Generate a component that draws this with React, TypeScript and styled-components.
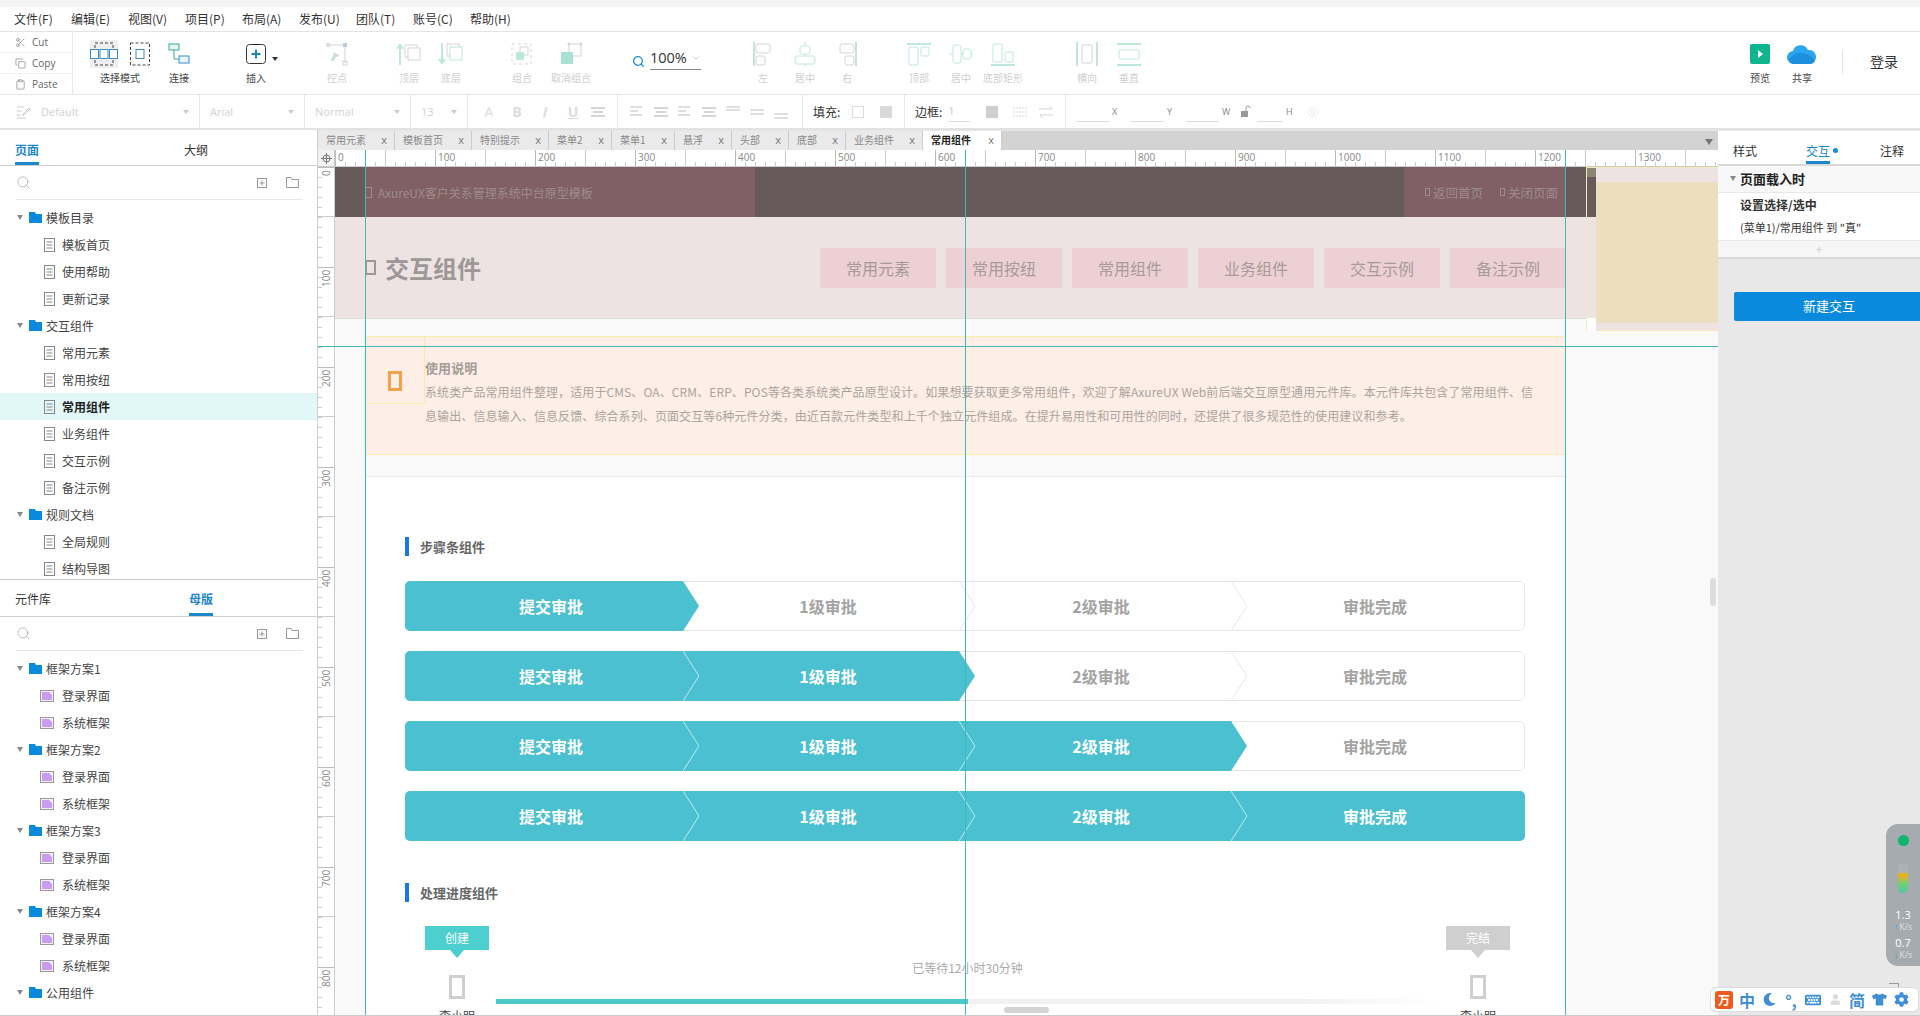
import React from "react";
import styled, { createGlobalStyle } from "styled-components";
import { Search, Eye, Scissors, Copy, Clipboard, ChevronDown } from "lucide-react";
import { FaCog, FaTshirt, FaKeyboard, FaUser, FaMoon } from "react-icons/fa";

const Global = createGlobalStyle`
  html, body { margin: 0; padding: 0; background: #fff; }
  body { font-family: "Noto Sans CJK SC", "Noto Sans", sans-serif; color: #333; }
  * { box-sizing: border-box; }
`;

const Root = styled.div`
  position: relative; width: 1920px; height: 1016px; overflow: hidden;
  display: flex; flex-direction: column; background: #fff;
`;
const TopStrip = styled.div`height: 7px; background: #f4f4f4; flex: none;`;
const MenuBar = styled.div`
  height: 25px; flex: none; display: flex; align-items: center; gap: 17px; padding-left: 14px;
  border-bottom: 1px solid #e4e4e4;
`;
const MenuItem = styled.span`font-size: 12px; line-height: 24px; color: #333; width: 40px; white-space: nowrap;`;

const Toolbar = styled.div`height: 63px; flex: none; display: flex; border-bottom: 1px solid #e6e6e6;`;
const ClipColumn = styled.div`width: 73px; flex: none; border-right: 1px solid #e6e6e6; display: flex; flex-direction: column;`;
const ClipRow = styled.div`
  flex: 1; display: flex; align-items: center; gap: 6px; padding-left: 15px; font-size: 10px; color: #666;
  font-family: "Open Sans", sans-serif; border-bottom: 1px solid #eee;
  &:last-child { border-bottom: 0; }
`;
const ToolGroup = styled.div<{ $ml?: number }>`display: flex; margin-left: ${p => p.$ml ?? 0}px; flex: none;`;
const ToolItem = styled.div<{ $w?: number }>`
  width: ${p => p.$w ?? 42}px; flex: none; display: flex; flex-direction: column; align-items: center; padding-top: 8px;
`;
const ToolIcon = styled.div`height: 28px; display: flex; align-items: center; justify-content: center; position: relative;`;
const ToolLabel = styled.div<{ $off?: boolean }>`
  font-size: 10px; line-height: 14px; margin-top: 3px; white-space: nowrap; color: ${p => (p.$off ? "#cfcfcf" : "#444")};
`;
const InsertCaret = styled.span`
  position: absolute; right: -12px; top: 17px; width: 0; height: 0;
  border-left: 3px solid transparent; border-right: 3px solid transparent; border-top: 4px solid #333;
`;
const SelectedBox = styled.div`background: #eee; width: 28px; height: 28px; display: flex; align-items: center; justify-content: center;`;
const SelectIcons = styled.div`display: flex; gap: 12px; align-items: center; height: 28px;`;
const ZoomBox = styled.div`width: 72px; display: flex; align-items: flex-start; padding-top: 15px; gap: 2px; flex: none; color: #1d8ccf;`;
const ZoomGlass = styled.span`display: flex; padding-top: 8px; flex: none;`;
const ZoomValue = styled.div`
  width: 51px; height: 23px; margin-left: 3px; border-bottom: 1px solid #888; font-size: 14.5px; line-height: 20px; color: #333;
  display: flex; align-items: center; gap: 4px; font-family: "Open Sans", sans-serif;
  svg { color: #bbb; }
`;
const RightTools = styled.div`margin-left: auto; display: flex; align-items: stretch; flex: none;`;
const VDivider = styled.div`width: 1px; height: 24px; background: #e5e5e5; margin: 18px 19px 0 19px;`;
const Login = styled.div`width: 58px; padding: 17px 0 0 8px; font-size: 14px; line-height: 24px; color: #333;`;

const FormatBar = styled.div`height: 35px; flex: none; display: flex; border-bottom: 2px solid #e2e2e2; color: #d4d4d4;`;
const FormatCell = styled.div<{ $w: number; $none?: boolean; $gap?: number; $pl?: number }>`
  width: ${p => p.$w}px; flex: none; display: flex; align-items: center; gap: ${p => p.$gap ?? 6}px; padding: 0 10px 0 ${p => p.$pl ?? 10}px;
  border-right: ${p => (p.$none ? "0" : "1px solid #e8e8e8")}; font-size: 11px; color: #d2d2d2; font-family: "Open Sans", sans-serif;
`;
const Caret = styled.span`
  margin-left: auto; width: 0; height: 0; border-left: 3px solid transparent; border-right: 3px solid transparent; border-top: 4px solid #ccc;
`;
const FmtLetter = styled.span<{ $i?: boolean; $u?: boolean; $thin?: boolean }>`
  width: 22px; text-align: center; font-size: 14px; font-weight: ${p => (p.$thin ? 400 : 700)}; color: #dcdcdc;
  font-style: ${p => (p.$i ? "italic" : "normal")}; text-decoration: ${p => (p.$u ? "underline" : "none")};
`;
const FieldLabel = styled.span`font-size: 12px; color: #333; white-space: nowrap; font-family: "Noto Sans CJK SC", sans-serif;`;
const FieldInput = styled.span<{ $w: number }>`
  width: ${p => p.$w}px; height: 20px; border-bottom: 1px solid #ddd; font-size: 11px; color: #ccc; line-height: 18px; flex: none;
`;
const AxisLabel = styled.span`font-size: 9px; color: #888; width: 13px; margin-left: -3px; font-family: "Open Sans", sans-serif; flex: none;`;
const GrayBox = styled.span<{ $c: string; $line?: boolean }>`
  width: 12px; height: 12px; flex: none; background: ${p => p.$c}; border: ${p => (p.$line ? "1px solid #ddd" : "0")};
`;
const StyleWrap = styled.span`display: flex; margin-right: 5px; flex: none;`;
const EyeWrap = styled.span`display: flex; margin-left: 1px; flex: none; color: #ddd;`;

const Body = styled.div`flex: 1; min-height: 0; display: flex;`;
const LeftPanel = styled.div`
  width: 318px; flex: none; display: flex; flex-direction: column; border-right: 1px solid #cfcfcf; border-bottom: 1px solid #ccc;
`;
const PanelBlock = styled.div<{ $h: number; $line?: boolean }>`
  height: ${p => p.$h}px; flex: none; overflow: hidden; border-bottom: ${p => (p.$line ? "1px solid #ccc" : "0")};
`;
const PanelTabs = styled.div<{ $gap: number; $h: number }>`
  height: ${p => p.$h}px; display: flex; align-items: flex-end; gap: ${p => p.$gap}px; padding-left: 15px; border-bottom: 1px solid #cfcfcf;
`;
const PanelTab = styled.div<{ $on?: boolean; $pb: number }>`
  font-size: 12px; line-height: 18px; padding-bottom: ${p => (p.$on ? p.$pb : p.$pb + 3)}px; white-space: nowrap;
  border-bottom: ${p => (p.$on ? "3px solid #1c87c9" : "0")}; color: ${p => (p.$on ? "#1c87c9" : "#333")};
  font-weight: ${p => (p.$on ? 700 : 400)};
`;
const SearchRow = styled.div`
  height: 34px; margin: 0 14px 0 16px; padding-right: 4px; border-bottom: 1px solid #e8e8e8; display: flex; align-items: center; color: #999;
`;
const SearchSpacer = styled.div`flex: 1;`;
const TreeList = styled.div`padding-top: 4px;`;
const TreeRow = styled.div<{ $sel?: boolean; $kind: "folder" | "page" | "master" }>`
  height: 27px; display: flex; align-items: center; font-size: 12px; white-space: nowrap;
  padding-left: ${p => (p.$kind === "folder" ? 17 : p.$kind === "page" ? 44 : 40)}px;
  gap: ${p => (p.$kind === "folder" ? 4 : p.$kind === "page" ? 7 : 8)}px;
  background: ${p => (p.$sel ? "#e2f8f8" : "transparent")};
  font-weight: ${p => (p.$sel ? 700 : 400)}; color: ${p => (p.$sel ? "#222" : "#444")};
`;
const TreeArrow = styled.span`
  width: 0; height: 0; border-left: 3px solid transparent; border-right: 3px solid transparent; border-top: 5px solid #888; margin-right: 2px; flex: none;
`;

const Work = styled.div`width: 1400px; flex: none; display: flex; flex-direction: column; min-height: 0; border-bottom: 1px solid #ccc;`;
const TabStrip = styled.div`height: 20px; flex: none; display: flex; background: #d2d2d2; align-items: stretch; position: relative; border-top: 1px solid #e6e6e6;`;
const DocTab = styled.div<{ $w: number; $on?: boolean }>`
  width: ${p => p.$w}px; flex: none; display: flex; align-items: center; justify-content: space-between; padding: 0 7px 2px 8px;
  background: ${p => (p.$on ? "#fff" : "#eaeaea")}; border-right: 1px solid #ccc; font-size: 10px; white-space: nowrap;
  color: ${p => (p.$on ? "#222" : "#888")}; font-weight: ${p => (p.$on ? 700 : 400)};
`;
const DocClose = styled.span`font-size: 11px; font-weight: 400; color: #777; font-family: "Open Sans", sans-serif;`;
const StripCaret = styled.span`
  position: absolute; right: 5px; top: 8px; width: 0; height: 0;
  border-left: 4px solid transparent; border-right: 4px solid transparent; border-top: 6px solid #777;
`;
const Stage = styled.div`flex: 1; min-height: 0; position: relative; display: flex; flex-direction: column; overflow: hidden;`;
const RulerTop = styled.div`height: 17px; flex: none; display: flex; background: #fff; border-bottom: 1px solid #ccc; overflow: hidden;`;
const RulerCorner = styled.div`
  width: 17px; flex: none; border-right: 1px solid #ccc; background: #f2f2f2; display: flex; align-items: center; justify-content: center; color: #777;
`;
const HCell = styled.div`
  width: 100px; flex: none; height: 16px; font-size: 10px; line-height: 14px; color: #888; padding-left: 3px; font-family: "Open Sans", sans-serif;
  background:
    linear-gradient(#bbb, #bbb) 0 0 / 1px 100% no-repeat,
    linear-gradient(#ccc, #ccc) 50px 0 / 1px 100% no-repeat,
    repeating-linear-gradient(90deg, #ccc 0 1px, transparent 1px 10px) 0 100% / 100% 4px no-repeat;
`;
const StageBody = styled.div`flex: 1; min-height: 0; display: flex;`;
const RulerLeft = styled.div`width: 17px; flex: none; background: #fff; border-right: 1px solid #ccc; overflow: hidden;`;
const VCell = styled.div`
  height: 100px; width: 16px; font-size: 10px; color: #888; padding-top: 3px; font-family: "Open Sans", sans-serif; line-height: 12px;
  writing-mode: vertical-rl; transform: rotate(180deg);
  display: flex; align-items: center; justify-content: flex-end; padding-bottom: 3px;
  background:
    linear-gradient(#bbb, #bbb) 0 100% / 100% 1px no-repeat,
    linear-gradient(#ccc, #ccc) 0 50px / 100% 1px no-repeat,
    repeating-linear-gradient(0deg, #ccc 0 1px, transparent 1px 10px) 100% 0 / 4px 100% no-repeat;
`;
const Canvas = styled.div`flex: 1; min-width: 0; position: relative; overflow: hidden; background: #f9f9f9;`;
const TopBar = styled.div`width: 1260px; height: 50px; background: #665a5a; display: flex; padding-left: 30px; font-size: 12px; color: #9e8c8c;`;
const TopRed = styled.div<{ $w: number; $ml?: string; $fs?: number }>`
  width: ${p => p.$w}px; margin-left: ${p => p.$ml ?? "0"}; background: #806063; display: flex; align-items: center; gap: 6px; white-space: nowrap; flex: none;
  font-size: ${p => p.$fs ?? 12}px;
`;
const TopItem = styled.span`display: flex; align-items: center; gap: 3px;`;
const Tofu = styled.span<{ $w: number; $h: number; $c: string; $b?: number }>`
  display: inline-block; flex: none; width: ${p => p.$w}px; height: ${p => p.$h}px; border: ${p => p.$b ?? 1}px solid ${p => p.$c};
`;
const Band = styled.div`
  width: 1261px; height: 102px; background: #eee3e3; border-bottom: 1px solid #ddd; display: flex; align-items: center; padding: 0 30px;
`;
const BandTitle = styled.div`display: flex; align-items: center; gap: 9px; font-size: 24px; font-weight: 700; color: #9d9797; line-height: 32px;`;
const BandNav = styled.div`margin-left: auto; display: flex; gap: 10px;`;
const BandBtn = styled.div`
  width: 116px; height: 40px; background: #edd0d4; font-size: 16px; line-height: 40px; text-align: center; color: #a89a9a;
`;
const Notice = styled.div`
  margin: 17px 0 0 30px; width: 1200px; height: 119px; background: #fdeee6; border-top: 1px solid #f8ecaa; border-bottom: 1px solid #f8ecaa; display: flex;
`;
const NoticeIcon = styled.div`
  width: 60px; height: 67px; flex: none; border-right: 1px solid #f8ecaa; border-bottom: 1px solid #f8ecaa;
  display: flex; align-items: center; justify-content: center; padding-top: 21px;
`;
const NoticeText = styled.div`padding-top: 21px; font-size: 12px; color: #aaa49f; min-width: 0; letter-spacing: 0.1px;`;
const NoticeTitle = styled.div`font-size: 13px; font-weight: 700; line-height: 20px; color: #a39d98; margin-bottom: 2px;`;
const NoticeLine = styled.div`line-height: 24px; white-space: nowrap; height: 24px;`;
const Sheet = styled.div`
  margin: 21px 0 0 30px; width: 1200px; background: #fff; border-top: 1px solid #eaeaea; height: 600px; padding: 60px 40px 0 40px;
`;
const SectionTitle = styled.div<{ $mt?: number }>`
  height: 19px; border-left: 4px solid #1677e6; padding-left: 11px; margin-top: ${p => p.$mt ?? 0}px;
  font-size: 13px; font-weight: 700; line-height: 19px; color: #666;
`;
const Stepper = styled.div`display: flex; flex-direction: column; gap: 20px; margin-top: 25px; width: 1120px;`;
const StepBar = styled.div`
  position: relative; height: 50px; display: flex; overflow: hidden; border-radius: 5px; background: #fff;
  &::before { content: ""; position: absolute; inset: 0; border: 1px solid #e6e6e6; border-radius: 5px; }
`;
const Step = styled.div<{ $w: number; $on: boolean; $tail: boolean; $shift: number }>`
  position: relative; width: ${p => p.$w}px; flex: none; display: flex; align-items: center; justify-content: center;
  padding-left: ${p => Math.max(p.$shift, 0)}px; padding-right: ${p => Math.max(-p.$shift, 0)}px;
  font-size: 16px; font-weight: 700; color: ${p => (p.$on ? "#fff" : "#a3a3a3")};
  &::before {
    content: ""; display: ${p => (p.$on ? "block" : "none")}; position: absolute; inset: 0 ${p => (p.$tail ? "-16px" : "0")} 0 0; background: #4ac0d0;
    clip-path: ${p =>
      p.$tail ? "polygon(0 0, calc(100% - 16px) 0, 100% 50%, calc(100% - 16px) 100%, 0 100%)" : "none"};
  }
`;
const StepText = styled.span`position: relative; z-index: 1;`;
const StepChevron = styled.svg`position: absolute; right: -16px; top: 0; z-index: 2;`;
const ProgressRow = styled.div`display: flex; margin: 24px 0 0 20px; width: 1085px;`;
const PNode = styled.div`width: 64px; flex: none; display: flex; flex-direction: column; align-items: center;`;
const PBadge = styled.div<{ $c: string }>`
  position: relative; width: 64px; height: 24px; background: ${p => p.$c}; color: #fff; font-size: 12px; line-height: 24px; text-align: center;
  margin-bottom: 25px;
  &::after {
    content: ""; position: absolute; left: 25px; top: 24px; width: 0; height: 0;
    border-left: 7px solid transparent; border-right: 7px solid transparent; border-top: 8px solid ${p => p.$c};
  }
`;
const PName = styled.div`font-size: 12px; color: #444; line-height: 18px; margin-top: 8px;`;
const PMain = styled.div`flex: 1; margin: 0 7px; display: flex; flex-direction: column; align-items: center; padding-top: 33px;`;
const PWait = styled.div`font-size: 12px; line-height: 18px; color: #aaa; height: 18px;`;
const PTrack = styled.div`width: 100%; height: 5px; margin-top: 22px; background: linear-gradient(90deg, #f1f1f1 85%, #fff); overflow: hidden;`;
const PFill = styled.div<{ $pct: number }>`width: ${p => p.$pct}%; height: 100%; background: #4cc8c8;`;

const Guide = styled.div<{ $x?: number; $y?: number }>`
  position: absolute; background: #43b8bb; z-index: 5;
  ${p => (p.$x !== undefined ? `left:${p.$x}px; top:0; bottom:0; width:1px;` : `top:${p.$y}px; left:0; right:0; height:1px;`)}
`;
const AsideMark = styled.div`
  position: absolute; left: 1251px; top: 0; width: 132px; height: 164px; display: flex; background: #eee3e3;
  border-left: 1px solid #f5ebb0; border-bottom: 1px solid #f5ebb0; border-top: 1px solid #f5ebb0;
`;
const AsideCol = styled.div`width: 9px; flex: none; display: flex; flex-direction: column;`;
const AsideCell = styled.div<{ $h: string; $c: string }>`height: ${p => p.$h}; background: ${p => p.$c}; flex: none;`;
const AsideFill = styled.div`flex: 1; margin: 14px 0 7px; background: #ebdfbe;`;
const HScroll = styled.div`position: absolute; left: 686px; bottom: 2px; width: 45px; height: 6px; background: #d4d4d4; border-radius: 3px; z-index: 6;`;
const VScroll = styled.div`position: absolute; right: 2px; top: 428px; width: 6px; height: 28px; background: #ddd; border-radius: 3px; z-index: 6;`;

const RightPanel = styled.div`flex: 1; min-width: 0; background: #e8e8e8; display: flex; flex-direction: column; border-bottom: 1px solid #ccc;`;
const RTabs = styled.div`height: 36px; background: #fff; border-bottom: 2px solid #d9d9d9; border-top: 1px solid #e6e6e6; display: flex; align-items: flex-end; padding-left: 15px; flex: none;`;
const RTab = styled.div<{ $on?: boolean; $w: number }>`
  width: ${p => p.$w}px; flex: none; font-size: 12px; line-height: 18px; color: ${p => (p.$on ? "#1c87c9" : "#333")};
  display: flex; align-items: center; gap: 3px; height: 24px; position: relative; padding-bottom: 3px;
`;
const RUnderline = styled.span`position: absolute; left: 0; bottom: 0; width: 24px; height: 3px; background: #1c87c9;`;
const RDot = styled.span`width: 5px; height: 5px; border-radius: 50%; background: #1c87c9;`;
const EventHead = styled.div`
  height: 26px; background: #f8f8f8; display: flex; align-items: center; gap: 2px; padding: 0 0 2px 12px; font-size: 13px; font-weight: 700; color: #222; flex: none;
`;
const EventBody = styled.div`height: 47px; background: #fff; margin-top: 1px; padding: 0 0 0 22px; font-size: 11px; line-height: 23px; color: #333; flex: none;`;
const EventBold = styled.div`font-weight: 700; font-size: 12px;`;
const EventAdd = styled.div`background: #f6f6f6; border-bottom: 2px solid #d9d9d9; margin-top: 1px; height: 18px; font-size: 11px; line-height: 16px; text-align: center; color: #ccc; flex: none;`;
const NewBtn = styled.div`
  margin: 33px 0 0 16px; height: 29px; background: #0a8add; border-radius: 2px 0 0 2px; color: #fff; font-size: 13px; line-height: 28px; text-align: center; padding-left: 4px;
`;

const NetWidget = styled.div`
  position: absolute; left: 1886px; top: 824px; width: 34px; height: 142px; background: #a6abb0; border-radius: 12px 0 0 12px;
  display: flex; flex-direction: column; align-items: center; padding-top: 11px; z-index: 10; color: #fff;
`;
const NetDot = styled.div`width: 11px; height: 11px; border-radius: 50%; background: #0eb56e;`;
const NetMeter = styled.div`
  width: 10px; height: 30px; margin-top: 17px; border-radius: 5px; background: linear-gradient(#aeb2b6 0 33%, #e2b320 33% 45%, #6ed07a 70%, #4cc8a0);
`;
const NetValue = styled.div`font-size: 11px; line-height: 13px; font-family: "Open Sans", sans-serif; text-align: center;`;
const NetUnit = styled.div`font-size: 9px; line-height: 11px; color: #dfe1e3; font-family: "Open Sans", sans-serif; white-space: nowrap; display: flex; align-items: center; gap: 1px;`;
const NetArrow = styled.span<{ $c: string }>`color: ${p => p.$c}; font-weight: 700; font-size: 9px;`;
const NetBlock = styled.div<{ $mt: number }>`margin-top: ${p => p.$mt}px; display: flex; flex-direction: column; align-items: center;`;
const CornerMark = styled.div`position: absolute; left: 1889px; top: 983px; width: 10px; height: 4px; border-top: 1px solid #999; border-right: 1px solid #999; z-index: 9;`;
const ImeBar = styled.div`
  position: absolute; left: 1710px; top: 987px; width: 209px; height: 25px; background: #fff; border: 1px solid #ddd; border-radius: 6px;
  display: flex; align-items: center; gap: 0; padding: 0 4px; z-index: 10; color: #3f8fd6;
`;
const ImeCell = styled.span<{ $c?: string }>`
  width: 22px; height: 20px; display: flex; align-items: center; justify-content: center; font-size: 16px; font-weight: 700; color: ${p => p.$c ?? "#3f8fd6"}; flex: none; line-height: 20px;
`;
const ImeLogo = styled.span`
  width: 18px; height: 18px; border-radius: 3px; background: #ee5a1d; color: #fff; font-size: 12px; line-height: 18px; text-align: center; font-weight: 700; flex: none; margin-right: 3px;
`;

const T = "#bfe6df";
const G = "#d5d5d5";

const Ico = ({ children, w = 26, h = 26 }: { children: React.ReactNode; w?: number; h?: number }) => (
  <svg width={w} height={h} viewBox={`0 0 ${w} ${h}`} fill="none">{children}</svg>
);

const icons: Record<string, React.ReactNode> = {
  handle: (
    <Ico>
      <path d="M4 4H21V22" stroke={G} /><rect x="19" y="2" width="4" height="4" fill="#bcd" /><rect x="2" y="2" width="4" height="4" fill="#ddd" />
      <rect x="19" y="20" width="4" height="4" stroke={G} /><path d="M7 20l3-9 6 4-4 1-2 4z" fill="#cdd" />
    </Ico>
  ),
  front: (
    <Ico><path d="M4 24V4M1 8l3-4 3 4" stroke={T} strokeWidth="2" /><rect x="9" y="4" width="12" height="12" stroke={G} /><rect x="12" y="7" width="12" height="12" stroke={G} fill="#fff" /></Ico>
  ),
  back: (
    <Ico><path d="M4 2V22M1 18l3 4 3-4" stroke={T} strokeWidth="2" /><rect x="9" y="3" width="12" height="12" stroke={G} /><rect x="12" y="6" width="12" height="13" stroke={T} fill="#fff" /></Ico>
  ),
  group: (
    <Ico><rect x="3" y="3" width="19" height="20" stroke={G} strokeDasharray="3 3" /><rect x="11" y="6" width="8" height="8" stroke={G} /><rect x="7" y="11" width="8" height="8" fill={T} /></Ico>
  ),
  ungroup: (
    <Ico><rect x="11" y="3" width="12" height="12" stroke={G} /><rect x="3" y="11" width="12" height="12" fill="#a9e0d4" /><circle cx="11" cy="3" r="1.5" fill={G} /><circle cx="23" cy="3" r="1.5" fill={G} /></Ico>
  ),
  left: (
    <Ico><path d="M4 1V25" stroke={T} strokeWidth="2" /><rect x="6" y="3" width="14" height="9" rx="2" stroke={G} /><rect x="6" y="15" width="9" height="9" rx="2" stroke={G} /></Ico>
  ),
  hcenter: (
    <Ico><path d="M13 1V25" stroke={T} /><rect x="8" y="5" width="10" height="8" rx="2" stroke={T} fill="#fff" /><rect x="3" y="15" width="20" height="8" rx="2" stroke={T} fill="#fff" /></Ico>
  ),
  right: (
    <Ico><path d="M22 1V25" stroke={T} strokeWidth="2" /><rect x="6" y="3" width="14" height="9" rx="2" stroke={G} /><rect x="11" y="15" width="9" height="9" rx="2" stroke={G} /></Ico>
  ),
  top: (
    <Ico><path d="M1 3H25" stroke={T} strokeWidth="2" /><rect x="3" y="6" width="9" height="18" rx="1" stroke={T} /><rect x="15" y="6" width="8" height="9" rx="1" stroke={T} /></Ico>
  ),
  vcenter: (
    <Ico><path d="M1 13H25" stroke={T} /><rect x="5" y="4" width="8" height="18" rx="2" stroke={T} fill="#fff" /><rect x="15" y="8" width="8" height="10" rx="2" stroke={T} fill="#fff" /></Ico>
  ),
  bottom: (
    <Ico><path d="M1 24H25" stroke={T} strokeWidth="2" /><rect x="3" y="3" width="9" height="18" rx="1" stroke={T} /><rect x="15" y="11" width="8" height="10" rx="1" stroke={T} /></Ico>
  ),
  dh: (
    <Ico><path d="M3 1V25M23 1V25" stroke={T} strokeWidth="2" /><rect x="8" y="4" width="10" height="18" rx="1" stroke={G} /></Ico>
  ),
  dv: (
    <Ico><path d="M1 3H25M1 24H25" stroke={T} strokeWidth="2" /><rect x="3" y="9" width="20" height="9" rx="1" stroke={T} /></Ico>
  ),
};

const SelectA = () => (
  <Ico w={28} h={24}>
    <rect x="5" y="1" width="18" height="22" stroke="#444" strokeDasharray="3 2" />
    <rect x="0.5" y="7.5" width="8" height="9" fill="#fff" stroke="#3b8dc4" /><rect x="10" y="7.5" width="8" height="9" fill="#fff" stroke="#3b8dc4" /><rect x="19.5" y="7.5" width="8" height="9" fill="#fff" stroke="#3b8dc4" />
  </Ico>
);
const SelectB = () => (
  <Ico w={20} h={24}>
    <rect x="0.5" y="1" width="19" height="22" stroke="#444" strokeDasharray="3 2" /><rect x="6" y="7.5" width="8" height="9" stroke="#3b8dc4" />
  </Ico>
);
const ConnectIcon = () => (
  <Ico w={22} h={22}>
    <rect x="1" y="1" width="10" height="6" fill="#e4f7f2" stroke="#3aaa98" /><path d="M6 7V16H11" stroke="#3aaa98" /><rect x="11" y="13" width="10" height="7" fill="#eaf4fb" stroke="#3b8dc4" />
  </Ico>
);
const InsertIcon = () => (
  <Ico w={20} h={20}>
    <rect x="0.5" y="0.5" width="19" height="19" rx="3" stroke="#333" /><path d="M10 5.5V14.5M5.5 10H14.5" stroke="#1c87c9" strokeWidth="2" />
  </Ico>
);
const PreviewIcon = () => (
  <Ico w={20} h={20}><rect width="20" height="20" rx="2" fill="#0fb58f" /><path d="M8 6l5 4-5 4z" fill="#fff" /></Ico>
);
const CloudIcon = () => (
  <Ico w={30} h={20}>
    <path d="M7 20a6.500 6.500 0 0 1-1-13 8 8 0 0 1 15-1 7 7 0 0 1 2 14z" fill="#2aa6ee" />
    <path d="M2 15c5-6 9-7 13-6s8 1 13 7c-1 3-3 4-5 4H7c-2 0-4-2-5-5z" fill="#1c90dc" />
  </Ico>
);
const StyleIcon = () => (
  <Ico w={14} h={14}><path d="M1 2H8M1 6H6M1 10H5M1 13H10" stroke="#ccc" /><path d="M7 11l1-3 5-5 1 1-5 5z" stroke="#ccc" /></Ico>
);
const Lines = ({ kind }: { kind: number }) => (
  <Ico w={16} h={14}>
    {kind === 0 && <path d="M1 3H15M3 7H13M1 11H15" stroke={G} strokeWidth="2" />}
    {kind === 1 && <path d="M1 2H13M1 6H9M1 10H13" stroke={G} strokeWidth="1.500" />}
    {kind === 2 && <path d="M1 2H15M1 5H15" stroke={G} strokeWidth="1.500" />}
    {kind === 3 && <path d="M1 5H15M1 9H15" stroke={G} strokeWidth="1.500" />}
    {kind === 4 && <path d="M1 9H15M1 13H15" stroke={G} strokeWidth="1.500" />}
    {kind === 5 && <path d="M1 3H15M1 7H15M1 11H15" stroke={G} strokeDasharray="2 1" />}
    {kind === 6 && <path d="M1 4H14L11 1M15 10H2L5 13" stroke={G} />}
  </Ico>
);
const LockIcon = () => (
  <Ico w={10} h={13}><path d="M5 6V3a2 2 0 0 1 4 0" stroke="#999" /><rect x="0" y="6" width="7" height="6" fill="#999" /></Ico>
);
const PageIcon = () => (
  <Ico w={11} h={14}><rect x="0.5" y="0.5" width="10" height="13" stroke="#888" /><path d="M2.500 4H8.500M2.500 7H8.500M2.500 10H8.500" stroke="#888" /></Ico>
);
const MasterIcon = () => (
  <Ico w={14} h={12}><rect x="0.5" y="0.5" width="13" height="11" fill="#f4eefc" stroke="#999" /><path d="M2 2H9L12 5V10H2z" fill="#c99cf2" /></Ico>
);
const FolderIcon = () => (
  <Ico w={13} h={11}><path d="M0 0H6L7 2H13V11H0z" fill="#0a8add" /></Ico>
);
const PlusBox = () => (
  <Ico w={10} h={10}><rect x="0.500" y="0.500" width="9" height="9" stroke="#999" /><path d="M5 2.500V7.500M2.500 5H7.500" stroke="#999" /></Ico>
);
const FolderOutline = () => (
  <Ico w={13} h={11}><path d="M0.500 10.500V0.500H5L6 2.500H12.500V10.500z" stroke="#999" /></Ico>
);

const menus = ["文件(F)", "编辑(E)", "视图(V)", "项目(P)", "布局(A)", "发布(U)", "团队(T)", "账号(C)", "帮助(H)"];
const docTabs: [string, number][] = [["常用元素", 77], ["模板首页", 77], ["特别提示", 77], ["菜单2", 63], ["菜单1", 63], ["悬浮", 57], ["头部", 57], ["底部", 57], ["业务组件", 77], ["常用组件", 79]];

type Node = { name: string; kind: "folder" | "page" | "master"; sel?: boolean };
const f = (name: string): Node => ({ name, kind: "folder" });
const p = (name: string, sel?: boolean): Node => ({ name, kind: "page", sel });
const m = (name: string): Node => ({ name, kind: "master" });

const pages: Node[] = [
  f("模板目录"), p("模板首页"), p("使用帮助"), p("更新记录"),
  f("交互组件"), p("常用元素"), p("常用按纽"), p("常用组件", true), p("业务组件"), p("交互示例"), p("备注示例"),
  f("规则文档"), p("全局规则"), p("结构导图"),
];
const masters: Node[] = [1, 2, 3, 4].flatMap(i => [f(`框架方案${i}`), m("登录界面"), m("系统框架")]).concat([f("公用组件")]);

const Tree = ({ items }: { items: Node[] }) => (
  <TreeList>
    {items.map((n, i) => (
      <TreeRow key={i} $kind={n.kind} $sel={n.sel}>
        {n.kind === "folder" && <TreeArrow />}
        {n.kind === "folder" && <FolderIcon />}
        {n.kind === "page" && <PageIcon />}
        {n.kind === "master" && <MasterIcon />}
        {n.name}
      </TreeRow>
    ))}
  </TreeList>
);

const SearchBar = () => (
  <SearchRow>
    <Search size={15} strokeWidth={1} />
    <SearchSpacer />
    <PlusBox />
    <ToolGroup $ml={19}><FolderOutline /></ToolGroup>
  </SearchRow>
);

const Tool = ({ icon, label, off = true }: { icon: React.ReactNode; label: string; off?: boolean }) => (
  <ToolItem>
    <ToolIcon>{icon}</ToolIcon>
    <ToolLabel $off={off}>{label}</ToolLabel>
  </ToolItem>
);

const stepDefs: [string, number, number][] = [["提交审批", 278, 14], ["1级审批", 276, 14], ["2级审批", 272, 12], ["审批完成", 294, -6]];

const StepRow = ({ done }: { done: number }) => (
  <StepBar>
    {stepDefs.map(([label, w, shift], i) => {
      const on = i < done;
      const last = i === stepDefs.length - 1;
      const edge = on && i === done - 1 && !last;
      return (
        <Step key={label} $w={w} $on={on} $tail={edge} $shift={shift}>
          <StepText>{label}</StepText>
          {!last && !edge && (
            <StepChevron width="16" height="50" viewBox="0 0 16 50" fill="none">
              <path d="M0 0L16 25L0 50" stroke={on ? "#bfeaf0" : "#e6e6e6"} />
            </StepChevron>
          )}
        </Step>
      );
    })}
  </StepBar>
);

const hLabels = Array.from({ length: 14 }, (_, i) => i * 100);
const vLabels = Array.from({ length: 9 }, (_, i) => i * 100);

export default function App() {
  return (
    <Root>
      <Global />
      <TopStrip />
      <MenuBar>{menus.map(x => <MenuItem key={x}>{x}</MenuItem>)}</MenuBar>
      <Toolbar>
        <ClipColumn>
          <ClipRow><Scissors size={11} strokeWidth={1.2} />Cut</ClipRow>
          <ClipRow><Copy size={11} strokeWidth={1.2} />Copy</ClipRow>
          <ClipRow><Clipboard size={11} strokeWidth={1.2} />Paste</ClipRow>
        </ClipColumn>
        <ToolGroup $ml={13}>
          <ToolItem $w={68}>
            <SelectIcons>
              <SelectedBox><SelectA /></SelectedBox>
              <SelectB />
            </SelectIcons>
            <ToolLabel>选择模式</ToolLabel>
          </ToolItem>
        </ToolGroup>
        <ToolGroup $ml={4}><Tool icon={<ConnectIcon />} label="连接" off={false} /></ToolGroup>
        <ToolGroup $ml={35}><Tool icon={<><InsertIcon /><InsertCaret /></>} label="插入" off={false} /></ToolGroup>
        <ToolGroup $ml={39}><Tool icon={icons.handle} label="控点" /></ToolGroup>
        <ToolGroup $ml={30}><Tool icon={icons.front} label="顶层" /><Tool icon={icons.back} label="底层" /></ToolGroup>
        <ToolGroup $ml={29}><Tool icon={icons.group} label="组合" /></ToolGroup>
        <ToolGroup $ml={7}><Tool icon={icons.ungroup} label="取消组合" /></ToolGroup>
        <ToolGroup $ml={40}>
          <ZoomBox>
            <ZoomGlass><Search size={13} strokeWidth={2.4} /></ZoomGlass>
            <ZoomValue>100%<ChevronDown size={10} /></ZoomValue>
          </ZoomBox>
        </ToolGroup>
        <ToolGroup $ml={38}><Tool icon={icons.left} label="左" /><Tool icon={icons.hcenter} label="居中" /><Tool icon={icons.right} label="右" /></ToolGroup>
        <ToolGroup $ml={30}><Tool icon={icons.top} label="顶部" /><Tool icon={icons.vcenter} label="居中" /><Tool icon={icons.bottom} label="底部矩形" /></ToolGroup>
        <ToolGroup $ml={42}><Tool icon={icons.dh} label="横向" /><Tool icon={icons.dv} label="垂直" /></ToolGroup>
        <RightTools>
          <Tool icon={<PreviewIcon />} label="预览" off={false} />
          <Tool icon={<CloudIcon />} label="共享" off={false} />
          <VDivider />
          <Login>登录</Login>
        </RightTools>
      </Toolbar>
      <FormatBar>
        <FormatCell $w={200} $pl={16}><StyleWrap><StyleIcon /></StyleWrap>Default<Caret /></FormatCell>
        <FormatCell $w={105}>Arial<Caret /></FormatCell>
        <FormatCell $w={106}>Normal<Caret /></FormatCell>
        <FormatCell $w={57}>13<Caret /></FormatCell>
        <FormatCell $w={150}>
          <FmtLetter $thin>A</FmtLetter><FmtLetter>B</FmtLetter><FmtLetter $i>I</FmtLetter><FmtLetter $u>U</FmtLetter><Lines kind={0} />
        </FormatCell>
        <FormatCell $w={185} $gap={8} $pl={11}>
          <Lines kind={1} /><Lines kind={0} /><Lines kind={1} /><Lines kind={0} /><Lines kind={2} /><Lines kind={3} /><Lines kind={4} />
        </FormatCell>
        <FormatCell $w={102}>
          <FieldLabel>填充:</FieldLabel>
          <ToolGroup $ml={6}><GrayBox $c="#fff" $line /></ToolGroup>
          <ToolGroup $ml={10}><GrayBox $c="#d9d9d9" /></ToolGroup>
        </FormatCell>
        <FormatCell $w={161}>
          <FieldLabel>边框:</FieldLabel>
          <FieldInput $w={22}>1</FieldInput>
          <ToolGroup $ml={10}><GrayBox $c="#cfcfcf" /></ToolGroup>
          <ToolGroup $ml={8}><Lines kind={5} /></ToolGroup>
          <ToolGroup $ml={4}><Lines kind={6} /></ToolGroup>
        </FormatCell>
        <FormatCell $w={270} $none>
          <FieldInput $w={33} /><AxisLabel>X</AxisLabel>
          <FieldInput $w={33} /><AxisLabel>Y</AxisLabel>
          <FieldInput $w={33} /><AxisLabel>W</AxisLabel>
          <LockIcon />
          <FieldInput $w={26} /><AxisLabel>H</AxisLabel>
          <EyeWrap><Eye size={14} strokeWidth={1} /></EyeWrap>
        </FormatCell>
      </FormatBar>
      <Body>
        <LeftPanel>
          <PanelBlock $h={450} $line>
            <PanelTabs $gap={145} $h={36}>
              <PanelTab $on $pb={3}>页面</PanelTab>
              <PanelTab $pb={3}>大纲</PanelTab>
            </PanelTabs>
            <SearchBar />
            <Tree items={pages} />
          </PanelBlock>
          <PanelBlock $h={435}>
            <PanelTabs $gap={138} $h={37}>
              <PanelTab $pb={5}>元件库</PanelTab>
              <PanelTab $on $pb={5}>母版</PanelTab>
            </PanelTabs>
            <SearchBar />
            <Tree items={masters} />
          </PanelBlock>
        </LeftPanel>
        <Work>
          <TabStrip>
            {docTabs.map(([name, w], i) => (
              <DocTab key={i} $w={w} $on={i === docTabs.length - 1}>{name}<DocClose>x</DocClose></DocTab>
            ))}
            <StripCaret />
          </TabStrip>
          <Stage>
            <RulerTop>
              <RulerCorner>
                <Ico w={11} h={11}><circle cx="5.500" cy="5.500" r="3.500" stroke="#777" /><path d="M5.500 0V11M0 5.500H11" stroke="#777" /></Ico>
              </RulerCorner>
              {hLabels.map(n => <HCell key={n}>{n}</HCell>)}
            </RulerTop>
            <StageBody>
              <RulerLeft>{vLabels.map(n => <VCell key={n}>{n}</VCell>)}</RulerLeft>
              <Canvas>
                <TopBar>
                  <TopRed $w={390}>
                    <TopItem><Tofu $w={7} $h={11} $c="#9e8c8c" />&nbsp;AxureUX客户关系管理系统中台原型模板</TopItem>
                  </TopRed>
                  <TopRed $w={161} $ml="649px" $fs={12.5}>
                    <ToolGroup $ml={15} />
                    <TopItem><Tofu $w={5} $h={8} $c="#9e8c8c" />返回首页</TopItem>
                    <ToolGroup $ml={5} />
                    <TopItem><Tofu $w={5} $h={8} $c="#9e8c8c" />关闭页面</TopItem>
                  </TopRed>
                </TopBar>
                <Band>
                  <BandTitle><Tofu $w={11} $h={15} $c="#9d9797" $b={2} />交互组件</BandTitle>
                  <BandNav>
                    {["常用元素", "常用按纽", "常用组件", "业务组件", "交互示例", "备注示例"].map(x => (
                      <BandBtn key={x}>{x}</BandBtn>
                    ))}
                  </BandNav>
                </Band>
                <Notice>
                  <NoticeIcon><Tofu $w={14} $h={20} $c="#f2a24c" $b={3} /></NoticeIcon>
                  <NoticeText>
                    <NoticeTitle>使用说明</NoticeTitle>
                    <NoticeLine>系统类产品常用组件整理，适用于CMS、OA、CRM、ERP、POS等各类系统类产品原型设计。如果想要获取更多常用组件，欢迎了解AxureUX Web前后端交互原型通用元件库。本元件库共包含了常用组件、信</NoticeLine>
                    <NoticeLine>息输出、信息输入、信息反馈、综合系列、页面交互等6种元件分类，由近百款元件类型和上千个独立元件组成。在提升易用性和可用性的同时，还提供了很多规范性的使用建议和参考。</NoticeLine>
                  </NoticeText>
                </Notice>
                <Sheet>
                  <SectionTitle>步骤条组件</SectionTitle>
                  <Stepper>
                    <StepRow done={1} />
                    <StepRow done={2} />
                    <StepRow done={3} />
                    <StepRow done={4} />
                  </Stepper>
                  <SectionTitle $mt={42}>处理进度组件</SectionTitle>
                  <ProgressRow>
                    <PNode>
                      <PBadge $c="#4dcfd0">创建</PBadge>
                      <Tofu $w={16} $h={24} $c="#cfcfcf" $b={3} />
                      <PName>李小明</PName>
                    </PNode>
                    <PMain>
                      <PWait>已等待12小时30分钟</PWait>
                      <PTrack><PFill $pct={50} /></PTrack>
                    </PMain>
                    <PNode>
                      <PBadge $c="#cfcfcf">完结</PBadge>
                      <Tofu $w={16} $h={24} $c="#cfcfcf" $b={3} />
                      <PName>李小明</PName>
                    </PNode>
                  </ProgressRow>
                </Sheet>
                <AsideMark>
                  <AsideCol>
                    <AsideCell $h="9px" $c="#8a8575" />
                    <AsideCell $h="40px" $c="#665a5a" />
                    <AsideCell $h="101px" $c="#eee3e3" />
                    <AsideCell $h="13px" $c="#fdfdfd" />
                  </AsideCol>
                  <AsideFill />
                </AsideMark>
              </Canvas>
            </StageBody>
            <Guide $x={47} />
            <Guide $x={647} />
            <Guide $x={1247} />
            <Guide $y={196} />
            <HScroll />
            <VScroll />
          </Stage>
        </Work>
        <RightPanel>
          <RTabs>
            <RTab $w={73}>样式</RTab>
            <RTab $w={74} $on>交互<RDot /><RUnderline /></RTab>
            <RTab $w={40}>注释</RTab>
          </RTabs>
          <EventHead><TreeArrow />页面载入时</EventHead>
          <EventBody>
            <EventBold>设置选择/选中</EventBold>
            (菜单1)/常用组件 到 "真"
          </EventBody>
          <EventAdd>+</EventAdd>
          <NewBtn>新建交互</NewBtn>
        </RightPanel>
      </Body>
      <NetWidget>
        <NetDot />
        <NetMeter />
        <NetBlock $mt={15}>
          <NetValue>1.3</NetValue>
          <NetUnit><NetArrow $c="#2f9be0">↑</NetArrow>K/s</NetUnit>
        </NetBlock>
        <NetBlock $mt={4}>
          <NetValue>0.7</NetValue>
          <NetUnit><NetArrow $c="#0eb56e">↓</NetArrow>K/s</NetUnit>
        </NetBlock>
      </NetWidget>
      <CornerMark />
      <ImeBar>
        <ImeLogo>万</ImeLogo>
        <ImeCell>中</ImeCell>
        <ImeCell><FaMoon size={13} /></ImeCell>
        <ImeCell>°,</ImeCell>
        <ImeCell><FaKeyboard size={16} /></ImeCell>
        <ImeCell $c="#ddd"><FaUser size={11} /></ImeCell>
        <ImeCell>简</ImeCell>
        <ImeCell><FaTshirt size={15} /></ImeCell>
        <ImeCell><FaCog size={15} /></ImeCell>
      </ImeBar>
    </Root>
  );
}
